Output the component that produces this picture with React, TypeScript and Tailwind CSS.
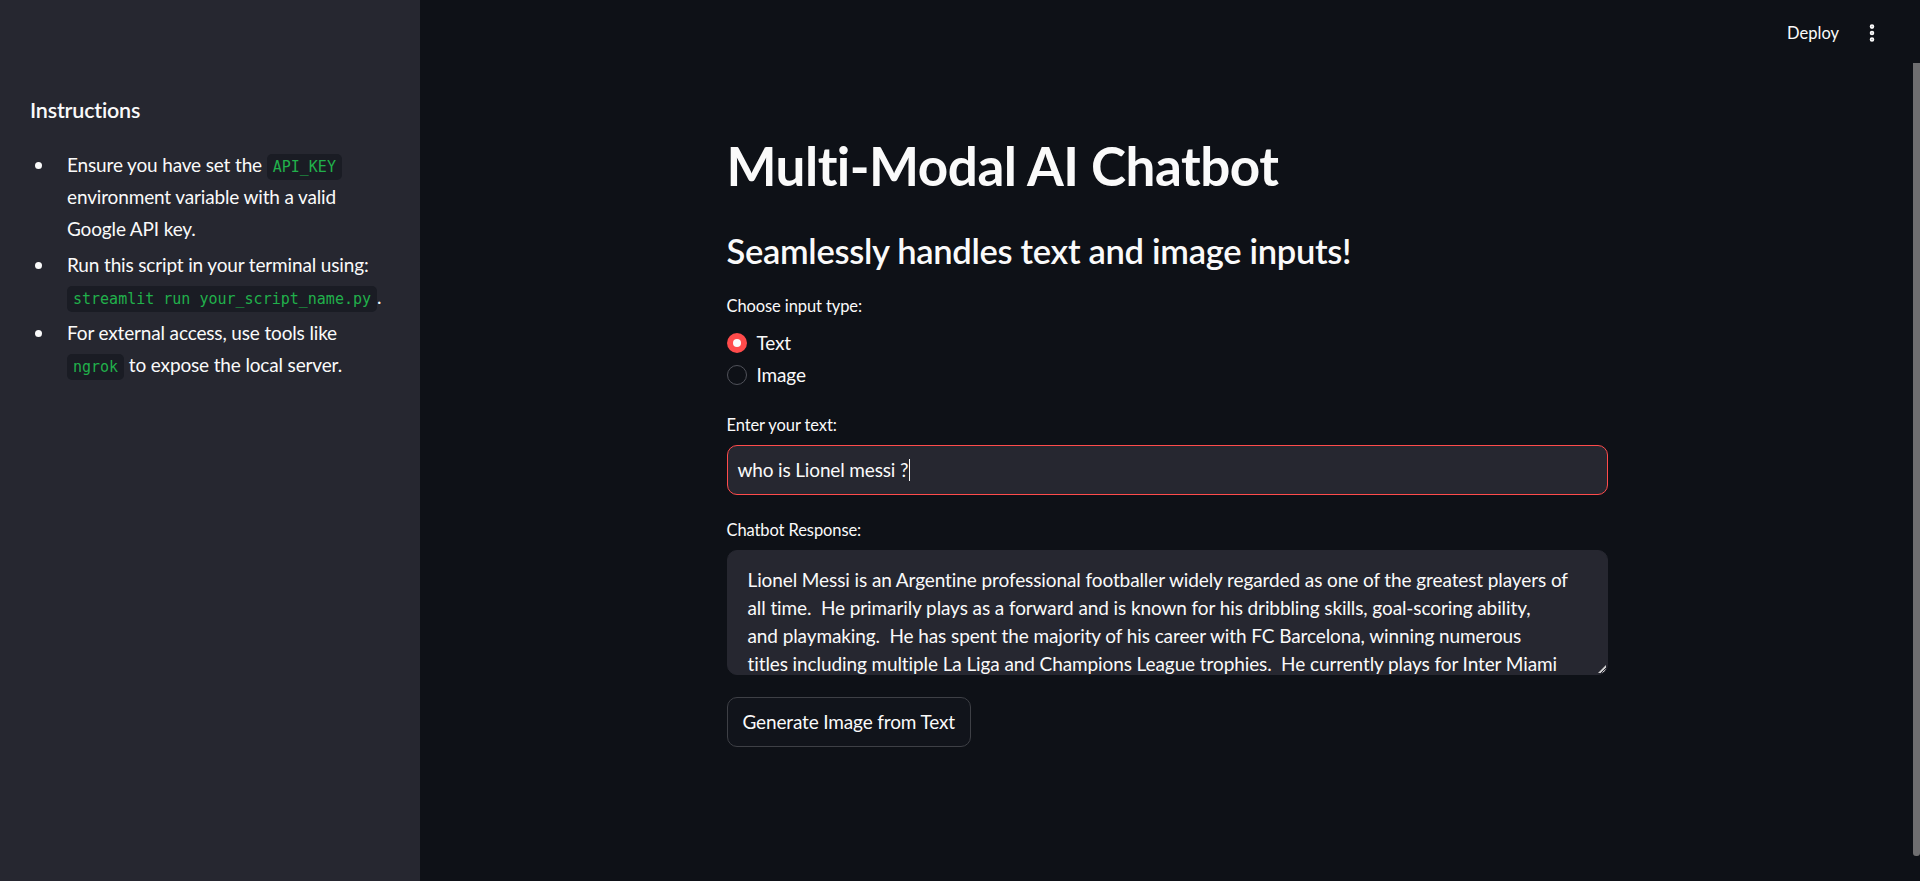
import { EllipsisVertical } from "lucide-react";

const responseLines = [
  "Lionel Messi is an Argentine professional footballer widely regarded as one of the greatest players of",
  "all time.  He primarily plays as a forward and is known for his dribbling skills, goal-scoring ability,",
  "and playmaking.  He has spent the majority of his career with FC Barcelona, winning numerous",
  "titles including multiple La Liga and Champions League trophies.  He currently plays for Inter Miami",
  "CF in Major League Soccer.",
];

function Code({ children }: { children: React.ReactNode }) {
  return (
    <code className="rounded-[5px] bg-[#1a1c24] px-[6px] py-[4px] font-['DejaVu_Sans_Mono',monospace] text-[15px] leading-none tracking-normal text-[#21b04b]">
      {children}
    </code>
  );
}

function Bullet({ children, first }: { children: React.ReactNode; first?: boolean }) {
  return (
    <li className={`flex ${first ? "" : "mt-[4px]"}`}>
      <span className="w-[37px] shrink-0">
        <span className="mt-[13px] ml-[5px] block h-[7px] w-[7px] rounded-full bg-[#fafafa]" />
      </span>
      <span className="leading-[32px]">{children}</span>
    </li>
  );
}

function Sidebar() {
  return (
    <aside className="h-full w-[420px] shrink-0 bg-[#262730] px-[30px] pt-[97px]">
      <h3 className="text-[21.5px] font-semibold leading-[27px] tracking-[-0.2px]">Instructions</h3>
      <ul className="mt-[25px] text-[19px] tracking-[-0.15px]">
        <Bullet first>
          Ensure you have set the <Code>API_KEY</Code>
          <br />
          environment variable with a valid
          <br />
          Google API key.
        </Bullet>
        <Bullet>
          Run this script in your terminal using:
          <br />
          <Code>streamlit run your_script_name.py</Code>.
        </Bullet>
        <Bullet>
          For external access, use tools like
          <br />
          <Code>ngrok</Code> to expose the local server.
        </Bullet>
      </ul>
    </aside>
  );
}

function Radio({ label, checked }: { label: string; checked?: boolean }) {
  return (
    <label className="flex h-[32px] items-center gap-[10px]">
      {checked ? (
        <span className="flex h-[20px] w-[20px] items-center justify-center rounded-full bg-[#ff4b4b]">
          <span className="h-[8px] w-[8px] rounded-full bg-[#fafafa]" />
        </span>
      ) : (
        <span className="h-[20px] w-[20px] rounded-full border-[1.5px] border-[#50525a]" />
      )}
      <span className="text-[19px] leading-[28px] tracking-[-0.15px]">{label}</span>
    </label>
  );
}

export default function App() {
  return (
    <div className="relative flex h-[881px] w-full overflow-hidden bg-[#0e1117] font-['Lato',sans-serif] text-[#fafafa]">
      <Sidebar />

      <main className="flex min-w-0 flex-1 flex-col pr-[6px]">
        <header className="flex h-[66px] shrink-0 items-center justify-end gap-[22px] pr-[31px]">
          <button className="text-[16.5px]">Deploy</button>
          <EllipsisVertical size={22} strokeWidth={3} className="text-[#fafafa]" />
        </header>

        <div className="mx-auto w-[881px] pt-[67px]">
          <h1 className="text-[53px] font-bold leading-[66px] tracking-[-0.5px]">Multi-Modal AI Chatbot</h1>
          <h2 className="mt-[31px] text-[34.5px] font-semibold leading-[42px] tracking-[-0.3px]">
            Seamlessly handles text and image inputs!
          </h2>

          <p className="mt-[23px] text-[16.5px] leading-[22px] tracking-[-0.1px]">Choose input type:</p>
          <div className="mt-[10px] flex flex-col">
            <Radio label="Text" checked />
            <Radio label="Image" />
          </div>

          <p className="mt-[23px] text-[16.5px] leading-[22px] tracking-[-0.1px]">Enter your text:</p>
          <div className="mt-[9px] flex h-[50px] items-center rounded-[10px] border border-[#ff4b4b] bg-[#262730] px-[10px]">
            <span className="text-[19px] leading-[28px] tracking-[-0.15px]">who is Lionel messi ?</span>
            <span className="ml-[1px] h-[22px] w-px bg-[#fafafa]" />
          </div>

          <p className="mt-[24px] text-[16.5px] leading-[22px] tracking-[-0.1px]">Chatbot Response:</p>
          <div className="relative mt-[9px] h-[125px] overflow-hidden rounded-[10px] border border-[#262730] bg-[#262730] px-[20px] pt-[15px]">
            {responseLines.map((line) => (
              <div key={line} className="whitespace-pre text-[19px] leading-[28px] tracking-[-0.1px]">
                {line}
              </div>
            ))}
            <svg className="absolute right-[1px] bottom-[1px]" width="8" height="8" viewBox="0 0 8 8">
              <path d="M8 0 L8 8 L0 8 Z" fill="#d0d0d0" />
              <path d="M3 8 L8 3" stroke="#262730" strokeWidth="1" />
            </svg>
          </div>

          <button className="mt-[22px] h-[50px] rounded-[10px] border border-[#3e4046] bg-[#11141b] px-[15px] text-[19px] leading-[28px] tracking-[-0.15px]">
            Generate Image from Text
          </button>
        </div>
      </main>

      <div className="absolute right-0 top-[63px] h-[793px] w-[7px] rounded-b-[3px] bg-[#6e6e70]" />
    </div>
  );
}
